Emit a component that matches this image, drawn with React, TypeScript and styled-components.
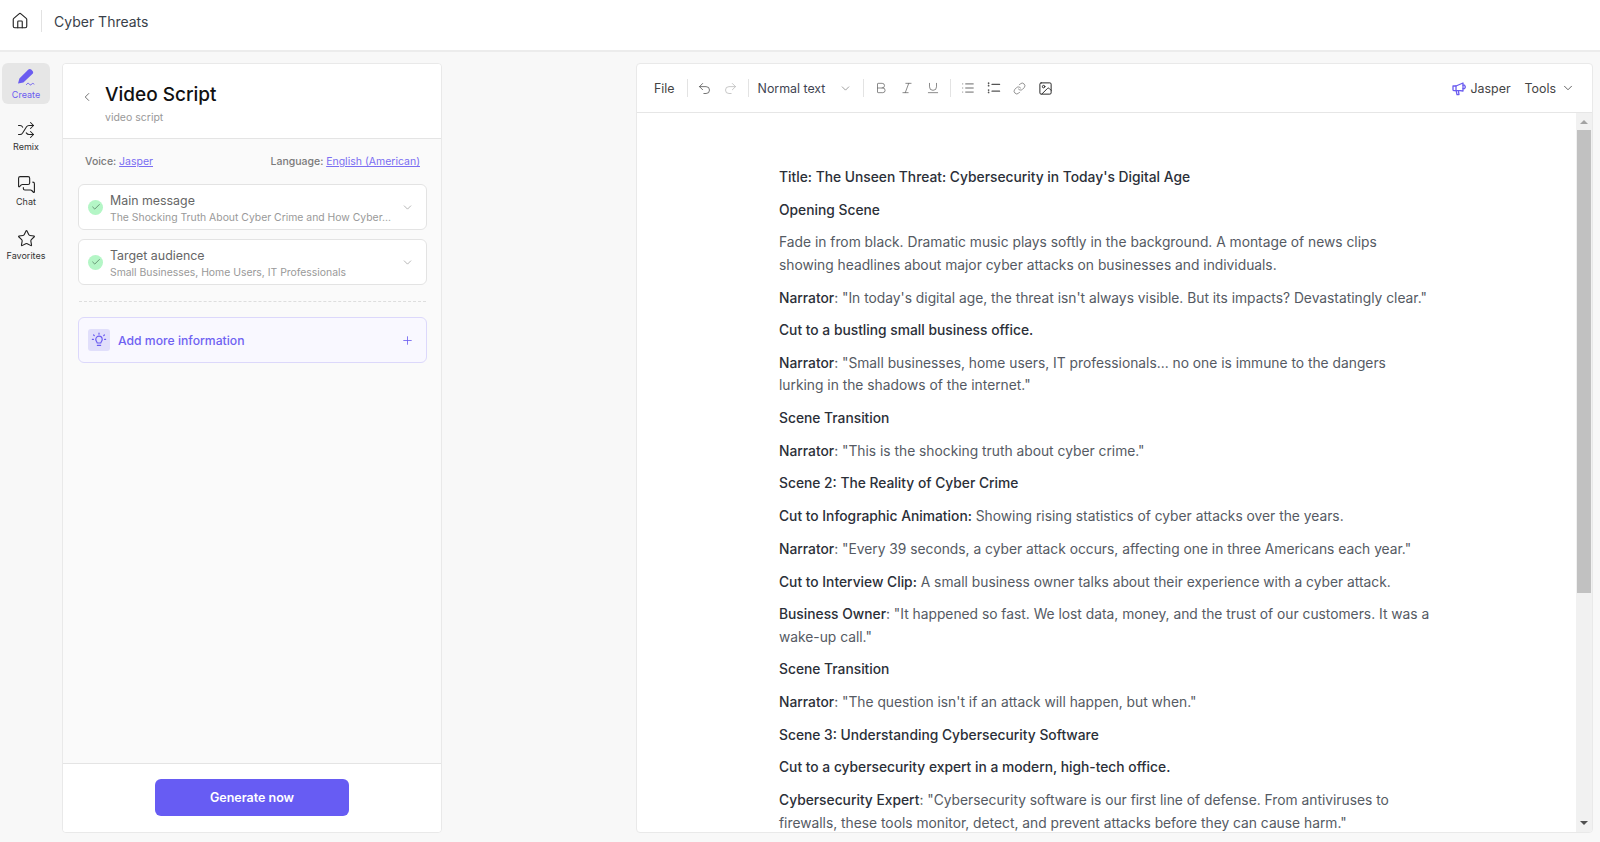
import React from "react";
import styled, {createGlobalStyle} from "styled-components";
import {
    Bold, Check, ChevronDown, ChevronLeft, House, Image as ImageIcon, Italic, Link, List,
    MessagesSquare, Plus, Redo2, Shuffle, Star, Underline, Undo2
} from "lucide-react";

const GlobalStyle = createGlobalStyle`
    html, body {
        margin: 0;
        height: 100%;
        background: #f8f8f8;
        font-family: Inter, "Noto Sans", "Liberation Sans", sans-serif;
    }
    #root {
        height: 100%;
    }
`

type Part = { text: string, strong?: boolean }

const script: Part[][] = [
    [{text: "Title: The Unseen Threat: Cybersecurity in Today's Digital Age", strong: true}],
    [{text: "Opening Scene", strong: true}],
    [{text: "Fade in from black. Dramatic music plays softly in the background. A montage of news clips showing headlines about major cyber attacks on businesses and individuals."}],
    [{text: "Narrator", strong: true}, {text: ": \"In today's digital age, the threat isn't always visible. But its impacts? Devastatingly clear.\""}],
    [{text: "Cut to a bustling small business office.", strong: true}],
    [{text: "Narrator", strong: true}, {text: ": \"Small businesses, home users, IT professionals... no one is immune to the dangers lurking in the shadows of the internet.\""}],
    [{text: "Scene Transition", strong: true}],
    [{text: "Narrator", strong: true}, {text: ": \"This is the shocking truth about cyber crime.\""}],
    [{text: "Scene 2: The Reality of Cyber Crime", strong: true}],
    [{text: "Cut to Infographic Animation:", strong: true}, {text: " Showing rising statistics of cyber attacks over the years."}],
    [{text: "Narrator", strong: true}, {text: ": \"Every 39 seconds, a cyber attack occurs, affecting one in three Americans each year.\""}],
    [{text: "Cut to Interview Clip:", strong: true}, {text: " A small business owner talks about their experience with a cyber attack."}],
    [{text: "Business Owner", strong: true}, {text: ": \"It happened so fast. We lost data, money, and the trust of our customers. It was a wake-up call.\""}],
    [{text: "Scene Transition", strong: true}],
    [{text: "Narrator", strong: true}, {text: ": \"The question isn't if an attack will happen, but when.\""}],
    [{text: "Scene 3: Understanding Cybersecurity Software", strong: true}],
    [{text: "Cut to a cybersecurity expert in a modern, high-tech office.", strong: true}],
    [{text: "Cybersecurity Expert", strong: true}, {text: ": \"Cybersecurity software is our first line of defense. From antiviruses to firewalls, these tools monitor, detect, and prevent attacks before they can cause harm.\""}],
]

const PenIcon = () => (
    <svg width="22" height="19" viewBox="0 0 22 19" fill="none">
        <path d="M3 15.5 L4.4 10.6 L13.4 1.6 C14.2 .8 15.4 .8 16.2 1.6 L17.6 3 C18.4 3.8 18.4 5 17.6 5.8 L8.4 14.4 Z" fill="#6b5cf0"/>
        <path d="M11.5 16.5 C12.6 14.8 13.4 14.8 14.2 16 C15 17.2 15.8 17.2 16.8 16 C17.5 15.2 18.2 15.3 19 16"
              stroke="#6b5cf0" strokeWidth="1" strokeLinecap="round"/>
    </svg>
)

const MegaphoneIcon = () => (
    <svg width="15" height="15" viewBox="0 0 15 15" fill="none" stroke="#6b5cf0" strokeWidth="1.3"
         strokeLinejoin="round" strokeLinecap="round">
        <path d="M1 5 H4 L11 2 V10 L8 9.6 H1.8 Q1 9.6 1 8.8 Z"/>
        <path d="M4 5 V9.6"/>
        <path d="M4.2 9.8 L5 13.6 H7 L6.4 9.8"/>
        <path d="M11 4.2 H12.6 Q14 5.8 12.6 7.6 H11"/>
    </svg>
)

const BulbIcon = () => (
    <svg width="16" height="16" viewBox="0 0 16 16" fill="none" stroke="#6b5cf0" strokeWidth="1.2" strokeLinecap="round">
        <path d="M6.2 11 C6 9.6 4.8 9.2 4.8 7.4 A3.2 3.2 0 0 1 11.2 7.4 C11.2 9.2 10 9.6 9.8 11 Z" strokeLinejoin="round"/>
        <path d="M6.4 13.4 H9.6"/>
        <path d="M8 1.2 V2.2 M2.6 3 L3.3 3.7 M13.4 3 L12.7 3.7 M1.4 7.4 H2.4 M13.6 7.4 H14.6"/>
    </svg>
)

const ShortListIcon = () => (
    <svg width="14" height="14" viewBox="0 0 14 14" fill="none" stroke="#555" strokeWidth="1.2" strokeLinecap="round">
        <path d="M1.6 2.2 V2.3 M1.6 4.6 V4.7 M1.6 9 V9.1 M1.6 11.4 V11.5" strokeWidth="1.7"/>
        <path d="M5 3.4 H12.6 M5 10.2 H12.6"/>
    </svg>
)

const NavItem = ({icon, label, active}: { icon: React.ReactNode, label: string, active?: boolean }) => (
    <NavButton $active={active}>
        {icon}
        <NavLabel $active={active}>{label}</NavLabel>
    </NavButton>
)

const InfoCard = ({title, text}: { title: string, text: string }) => (
    <Card>
        <CheckCircle><Check size={10} strokeWidth={2} color="#5a8468"/></CheckCircle>
        <CardText>
            <CardTitle>{title}</CardTitle>
            <CardSub>{text}</CardSub>
        </CardText>
        <ChevronDown size={13} strokeWidth={1.3} color="#999"/>
    </Card>
)

export default function App() {
    return (
        <Page>
            <GlobalStyle/>
            <Header>
                <House size={18} strokeWidth={1.5} color="#222"/>
                <HeaderRule/>
                <HeaderTitle>Cyber Threats</HeaderTitle>
            </Header>
            <Body>
                <Sidebar>
                    <NavItem active icon={<PenIcon/>} label="Create"/>
                    <NavItem icon={<Shuffle size={18} strokeWidth={1.4} color="#222"/>} label="Remix"/>
                    <NavItem icon={<MessagesSquare size={19} strokeWidth={1.4} color="#222"/>} label="Chat"/>
                    <NavItem icon={<Star size={19} strokeWidth={1.4} color="#222"/>} label="Favorites"/>
                </Sidebar>
                <Panel>
                    <PanelHead>
                        <BackIcon><ChevronLeft size={14} strokeWidth={1.4} color="#555"/></BackIcon>
                        <div>
                            <PanelTitle>Video Script</PanelTitle>
                            <PanelSub>video script</PanelSub>
                        </div>
                    </PanelHead>
                    <PanelBody>
                        <MetaRow>
                            <span>Voice: <MetaLink>Jasper</MetaLink></span>
                            <span>Language: <MetaLink>English (American)</MetaLink></span>
                        </MetaRow>
                        <InfoCard title="Main message" text="The Shocking Truth About Cyber Crime and How Cyber..."/>
                        <InfoCard title="Target audience" text="Small Businesses, Home Users, IT Professionals"/>
                        <DashedRule/>
                        <AddMore>
                            <BulbBox><BulbIcon/></BulbBox>
                            <AddText>Add more information</AddText>
                            <Plus size={13} strokeWidth={1.5} color="#6b5cf0"/>
                        </AddMore>
                    </PanelBody>
                    <PanelFoot>
                        <GenerateButton>Generate now</GenerateButton>
                    </PanelFoot>
                </Panel>
                <Editor>
                    <Toolbar>
                        <FileMenu>File</FileMenu>
                        <ToolRule/>
                        <ToolIcon><Undo2 size={15} strokeWidth={1.3} color="#555"/></ToolIcon>
                        <ToolIcon><Redo2 size={15} strokeWidth={1.3} color="#bbb"/></ToolIcon>
                        <ToolRule/>
                        <StyleSelect>
                            Normal text
                            <ChevronDown size={13} strokeWidth={1.3} color="#777"/>
                        </StyleSelect>
                        <ToolRule/>
                        <ToolIcon><Bold size={14} strokeWidth={1.3} color="#666"/></ToolIcon>
                        <ToolIcon><Italic size={14} strokeWidth={1.3} color="#666"/></ToolIcon>
                        <ToolIcon><Underline size={14} strokeWidth={1.3} color="#666"/></ToolIcon>
                        <ToolRule/>
                        <ToolIcon><List size={14} strokeWidth={1.5} color="#555"/></ToolIcon>
                        <ToolIcon><ShortListIcon/></ToolIcon>
                        <ToolIcon><Link size={13} strokeWidth={1.3} color="#666"/></ToolIcon>
                        <ToolIcon><ImageIcon size={15} strokeWidth={1.6} color="#2c2c2c"/></ToolIcon>
                        <ToolRight>
                            <MegaphoneIcon/>
                            <ToolText>Jasper</ToolText>
                            <ToolsMenu>
                                Tools
                                <ChevronDown size={14} strokeWidth={1.4} color="#444"/>
                            </ToolsMenu>
                        </ToolRight>
                    </Toolbar>
                    <EditorMain>
                        <Document>
                            {script.map((parts, i) => (
                                <Paragraph key={i}>
                                    {parts.map((p, j) => p.strong
                                        ? <Strong key={j}>{p.text}</Strong>
                                        : <span key={j}>{p.text}</span>)}
                                </Paragraph>
                            ))}
                        </Document>
                        <ScrollTrack>
                            <ArrowUp/>
                            <ScrollThumb/>
                            <ArrowDown/>
                        </ScrollTrack>
                    </EditorMain>
                </Editor>
            </Body>
        </Page>
    )
}

const Page = styled.div`
    height: 842px;
    display: flex;
    flex-direction: column;
    overflow: hidden;
`

const Header = styled.header`
    height: 52px;
    flex: none;
    box-sizing: border-box;
    display: flex;
    align-items: center;
    padding: 0 0 8px 11px;
    background: #fff;
    border-bottom: 2px solid #ececec;
`

const HeaderRule = styled.div`
    width: 1px;
    height: 22px;
    margin: 0 12px;
    background: #e2e2e2;
`

const HeaderTitle = styled.div`
    font-size: 14px;
    color: #3a3f4a;
`

const Body = styled.div`
    flex: 1;
    min-height: 0;
    display: flex;
    padding: 11px 7px 9px 2px;
`

const Sidebar = styled.nav`
    width: 48px;
    flex: none;
    margin-right: 12px;
    display: flex;
    flex-direction: column;
    gap: 13px;
`

const NavButton = styled.div<{ $active?: boolean }>`
    height: 41px;
    box-sizing: border-box;
    padding-bottom: ${p => p.$active ? "0" : "2px"};
    border-radius: 6px;
    display: flex;
    flex-direction: column;
    align-items: center;
    justify-content: center;
    gap: 3px;
    background: ${p => p.$active ? "#e6e6e6" : "transparent"};
`

const NavLabel = styled.span<{ $active?: boolean }>`
    font-size: 9px;
    line-height: 10px;
    color: ${p => p.$active ? "#6b5cf0" : "#333"};
`

const Panel = styled.section`
    width: 380px;
    flex: none;
    display: flex;
    flex-direction: column;
    box-sizing: border-box;
    background: #fafafa;
    border: 1px solid #e9e9e9;
    border-radius: 4px;
    overflow: hidden;
`

const PanelHead = styled.div`
    height: 75px;
    flex: none;
    box-sizing: border-box;
    display: flex;
    align-items: center;
    gap: 11px;
    padding: 5px 0 0 17px;
    background: #fff;
    border-bottom: 1px solid #e4e4e4;
`

const BackIcon = styled.div`
    display: flex;
    margin-bottom: 14px;
`

const PanelTitle = styled.h1`
    margin: 0 0 3px;
    font-size: 19px;
    line-height: 26px;
    font-weight: 500;
    color: #111;
`

const PanelSub = styled.div`
    font-size: 10.5px;
    line-height: 14px;
    color: #999;
`

const PanelBody = styled.div`
    flex: 1;
    padding: 16px 14px 0 15px;
    display: flex;
    flex-direction: column;
    gap: 9px;
`

const MetaRow = styled.div`
    display: flex;
    justify-content: space-between;
    padding: 0 7px;
    margin-bottom: 6px;
    font-size: 10.5px;
    line-height: 14px;
    font-weight: 500;
    color: #7a7a7a;
`

const MetaLink = styled.span`
    font-weight: 400;
    color: #7b6ef2;
    text-decoration: underline;
`

const Card = styled.div`
    height: 46px;
    box-sizing: border-box;
    display: flex;
    align-items: center;
    padding: 0 12px 0 9px;
    background: #fff;
    border: 1px solid #e3e3e3;
    border-radius: 6px;
`

const CheckCircle = styled.div`
    width: 15px;
    height: 15px;
    flex: none;
    margin-right: 7px;
    border-radius: 50%;
    display: flex;
    align-items: center;
    justify-content: center;
    background: #b4f6c6;
`

const CardText = styled.div`
    flex: 1;
    min-width: 0;
    padding-top: 4px;
`

const CardTitle = styled.div`
    margin-bottom: 1px;
    font-size: 12.4px;
    line-height: 16px;
    color: #666;
`

const CardSub = styled.div`
    font-size: 10.4px;
    line-height: 15px;
    color: #999;
    white-space: nowrap;
`

const DashedRule = styled.div`
    margin: 7px 1px 6px;
    border-top: 1px dashed #dedede;
`

const AddMore = styled.div`
    height: 46px;
    box-sizing: border-box;
    display: flex;
    align-items: center;
    padding: 0 12px 0 9px;
    background: #f9f8ff;
    border: 1px solid #dcd8fb;
    border-radius: 6px;
`

const BulbBox = styled.div`
    width: 22px;
    height: 22px;
    margin-right: 8px;
    border-radius: 3px;
    display: flex;
    align-items: center;
    justify-content: center;
    background: #e1dffb;
`

const AddText = styled.div`
    flex: 1;
    font-size: 12.2px;
    font-weight: 500;
    color: #6f62f2;
`

const PanelFoot = styled.div`
    height: 69px;
    flex: none;
    box-sizing: border-box;
    display: flex;
    justify-content: center;
    padding-top: 15px;
    background: #fff;
    border-top: 1px solid #e4e4e4;
`

const GenerateButton = styled.button`
    width: 194px;
    height: 37px;
    border: none;
    border-radius: 6px;
    background: #675cf3;
    color: #fff;
    font-family: inherit;
    font-size: 12.5px;
    font-weight: 600;
`

const Editor = styled.section`
    flex: none;
    width: 957px;
    margin-left: auto;
    box-sizing: border-box;
    display: flex;
    flex-direction: column;
    background: #fff;
    border: 1px solid #e9e9e9;
    border-radius: 4px;
    overflow: hidden;
`

const Toolbar = styled.div`
    height: 49px;
    flex: none;
    box-sizing: border-box;
    display: flex;
    align-items: center;
    padding: 0 17px 0 17px;
    border-bottom: 1px solid #e6e6e6;
`

const ToolText = styled.span`
    font-size: 12.4px;
    color: #444;
`

const FileMenu = styled(ToolText)`
    padding-right: 8px;
`

const ToolRule = styled.div`
    width: 1px;
    height: 18px;
    margin: 0 4px;
    background: #e3e3e3;
`

const ToolIcon = styled.div`
    width: 26px;
    height: 26px;
    flex: none;
    display: flex;
    align-items: center;
    justify-content: center;
`

const StyleSelect = styled.div`
    width: 94px;
    padding: 0 7px 0 5px;
    display: flex;
    align-items: center;
    justify-content: space-between;
    font-size: 12.4px;
    color: #3f4552;
`

const ToolRight = styled.div`
    margin-left: auto;
    display: flex;
    align-items: center;
    gap: 4px;
`

const ToolsMenu = styled.div`
    margin-left: 10px;
    display: flex;
    align-items: center;
    gap: 5px;
    font-size: 12.4px;
    color: #444;
`

const EditorMain = styled.div`
    flex: 1;
    min-height: 0;
    display: flex;
`

const Document = styled.article`
    flex: 1;
    min-width: 0;
    overflow: hidden;
    box-sizing: border-box;
    padding: 53px 143px 0 142px;
`

const Paragraph = styled.p`
    margin: 0 0 10.3px;
    font-size: 13.8px;
    line-height: 22.4px;
    color: #555a63;
`

const Strong = styled.span`
    font-weight: 500;
    color: #2b2f38;
`

const ScrollTrack = styled.div`
    width: 16px;
    flex: none;
    box-sizing: border-box;
    padding: 7px 1px;
    display: flex;
    flex-direction: column;
    align-items: center;
    background: #f1f1f1;
`

const ArrowUp = styled.div`
    width: 0;
    height: 0;
    border-left: 4px solid transparent;
    border-right: 4px solid transparent;
    border-bottom: 4px solid #a3a3a3;
`

const ArrowDown = styled.div`
    width: 0;
    height: 0;
    margin-top: auto;
    border-left: 4px solid transparent;
    border-right: 4px solid transparent;
    border-top: 4px solid #505050;
`

const ScrollThumb = styled.div`
    width: 100%;
    height: 463px;
    margin-top: 6px;
    background: #c1c1c1;
`
